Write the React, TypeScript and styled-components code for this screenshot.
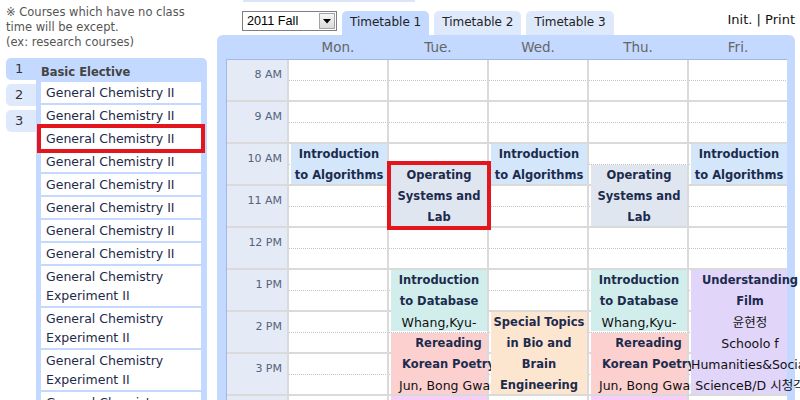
import React from "react";
import styled, { createGlobalStyle } from "styled-components";

const GlobalStyle = createGlobalStyle`
  html, body { margin: 0; padding: 0; overflow: hidden; background: #fff; }
  body { font-family: "DejaVu Sans", "Noto Sans CJK KR", sans-serif; }
`;

const BLUE = "#c3d9ff";
const LIGHT = "#dfe9fc";
const LINE = "#dadada";

const Page = styled.div`
  display: flex;
  gap: 10px;
  width: 800px;
  height: 400px;
  overflow: hidden;
`;

const LeftColumn = styled.div`
  width: 201px;
  padding-left: 6px;
  flex: none;
`;

const Notes = styled.div`
  padding-top: 5px;
  margin-bottom: 8px;
  font-size: 11.5px;
  line-height: 15px;
  color: #555;
  white-space: nowrap;
`;

const SideBox = styled.div`
  display: flex;
`;

const SideTabs = styled.div`
  width: 30px;
  flex: none;
`;

const SideTab = styled.div<{ $active?: boolean }>`
  height: 22px;
  line-height: 22px;
  padding-left: 9px;
  margin-bottom: 4px;
  font-size: 13px;
  color: #333;
  background: ${(p) => (p.$active ? BLUE : LIGHT)};
  border-radius: 5px 0 0 5px;
`;

const ListPanel = styled.div`
  flex: 1;
  min-height: 400px;
  background: ${BLUE};
  border-radius: 0 5px 0 0;
  padding: 0 6px 0 5px;
`;

const ListHeader = styled.div`
  padding: 5px 0 1px;
  line-height: 18px;
  font-size: 11.5px;
  font-weight: bold;
  color: #444;
`;

const ListItem = styled.div<{ $selected?: boolean }>`
  background: #fff;
  margin-bottom: 2px;
  padding: 1px 5px;
  line-height: 19px;
  font-size: 12.5px;
  color: #1e2a4a;
  outline: ${(p) => (p.$selected ? "4px solid #e3161e" : "none")};
`;

const RightColumn = styled.div`
  width: 578px;
  flex: none;
  display: flex;
  flex-direction: column;
`;

const TopStrip = styled.div`
  flex: none;
  margin-left: 26px;
  width: 172px;
  height: 2px;
  background: #dae5fa;
`;

const Toolbar = styled.div`
  flex: none;
  display: flex;
  align-items: flex-end;
  padding-left: 25px;
  margin-top: 9px;
  height: 24px;
`;

const SelectBox = styled.div`
  box-sizing: border-box;
  width: 95px;
  height: 20px;
  margin-bottom: 4px;
  border: 1px solid #7f7f7f;
  background: #fff;
  display: flex;
  align-items: center;
  justify-content: space-between;
  padding: 0 1px 0 4px;
  font-family: "Liberation Sans", Arial, sans-serif;
  font-size: 12.7px;
  color: #000;
`;

const SelectButton = styled.div`
  box-sizing: border-box;
  width: 16px;
  height: 16px;
  border: 1px solid #a3a3a3;
  background: linear-gradient(#f6f6f6, #dadada);
  display: flex;
  align-items: center;
  justify-content: center;
`;

const TabButton = styled.div<{ $active?: boolean }>`
  margin-left: 5px;
  height: 24px;
  line-height: 22px;
  padding: 0 8px;
  font-size: 12px;
  color: #222;
  background: ${(p) => (p.$active ? BLUE : LIGHT)};
  border-radius: 5px 5px 0 0;
`;

const Links = styled.div`
  margin-left: auto;
  align-self: flex-start;
  margin-top: 1px;
  line-height: 16px;
  font-size: 13px;
  color: #111;
`;

const Panel = styled.div`
  flex: none;
  background: ${BLUE};
  border-radius: 6px 6px 0 0;
  padding: 0 8px 0 9px;
`;

const DayHeader = styled.div`
  display: grid;
  grid-template-columns: 60px repeat(5, 98px);
  column-gap: 2px;
  margin-left: 1px;
  height: 24px;
  align-items: center;
  font-size: 13.5px;
  color: #666;
  text-align: center;
`;

const Grid = styled.div`
  display: grid;
  grid-template-columns: 60px repeat(5, 98px);
  grid-template-rows: repeat(20, 21px);
  column-gap: 2px;
  width: 560px;
  background: ${LINE};
  border-top: 1px solid #a3b9df;
  border-left: 1px solid #a3b9df;
`;

const TimeCell = styled.div<{ $row: number }>`
  grid-column: 1;
  grid-row: ${(p) => p.$row} / span 2;
  background: #e4ebf6;
  border-bottom: 2px solid ${LINE};
  text-align: right;
  padding: 8px 5px 0 0;
  font-size: 11px;
  line-height: 14px;
  color: #56627a;
`;

const DayCell = styled.div<{ $row: number; $col: number }>`
  grid-column: ${(p) => p.$col};
  grid-row: ${(p) => p.$row} / span 2;
  background: linear-gradient(to right, #c4c4c4 50%, transparent 0) 0 20px / 2px 1px repeat-x, #fff;
  border-bottom: 2px solid ${LINE};
`;

const Event = styled.div<{ $col: number; $start: number; $end: number; $bg: string; $hl?: boolean }>`
  grid-column: ${(p) => p.$col};
  grid-row: ${(p) => p.$start} / ${(p) => p.$end};
  margin: 0 0 2px 2px;
  min-width: 0;
  position: relative;
  z-index: ${(p) => (p.$hl ? 2 : "auto")};
  background: ${(p) => p.$bg};
  outline: ${(p) => (p.$hl ? "4px solid #e3161e" : "none")};
  text-align: center;
  line-height: 21px;
`;

const EventInner = styled.div<{ $w?: number }>`
  width: ${(p) => (p.$w ? `${p.$w}px` : "auto")};
`;

const EventTitle = styled.div`
  font-size: 11.5px;
  font-weight: bold;
  color: #1c2b4d;
`;

const EventInfo = styled.div`
  font-size: 12.5px;
  color: #111;
`;

type Ev = {
  day: number;
  from: number;
  to: number;
  title?: string;
  info?: string[];
  bg: string;
  hl?: boolean;
  w?: number;
};

const C = {
  algo: "#d3e6fa",
  os: "#dfe6f0",
  db: "#d1eeec",
  poetry: "#fdd0d0",
  bio: "#fde6d0",
  film: "#e2d5fa",
  mag: "#f8cdf7",
};

const events: Ev[] = [
  { day: 0, from: 10, to: 11, title: "Introduction to Algorithms", bg: C.algo },
  { day: 1, from: 10.5, to: 12, title: "Operating Systems and Lab", bg: C.os, hl: true },
  { day: 1, from: 13, to: 14.5, title: "Introduction to Database", info: ["Whang,Kyu-Young"], bg: C.db },
  { day: 1, from: 14.5, to: 16, title: "Rereading Korean Poetry", info: ["Jun, Bong Gwan"], bg: C.poetry, w: 115 },
  { day: 1, from: 16, to: 17, bg: C.mag },
  { day: 2, from: 10, to: 11, title: "Introduction to Algorithms", bg: C.algo },
  { day: 2, from: 14, to: 16, title: "Special Topics in Bio and Brain Engineering", bg: C.bio },
  { day: 3, from: 10.5, to: 12, title: "Operating Systems and Lab", bg: C.os },
  { day: 3, from: 13, to: 14.5, title: "Introduction to Database", info: ["Whang,Kyu-Young"], bg: C.db },
  { day: 3, from: 14.5, to: 16, title: "Rereading Korean Poetry", info: ["Jun, Bong Gwan"], bg: C.poetry, w: 115 },
  { day: 3, from: 16, to: 17, bg: C.mag },
  { day: 4, from: 10, to: 11, title: "Introduction to Algorithms", bg: C.algo },
  {
    day: 4,
    from: 13,
    to: 16,
    title: "Understanding Film",
    info: ["윤현정", "Schoolo f Humanities&Social ScienceB/D 시청각실"],
    bg: C.film,
    w: 118,
  },
];

const hours = [8, 9, 10, 11, 12, 13, 14, 15, 16, 17];
const hourLabel = (h: number) => (h < 12 ? `${h} AM` : h === 12 ? "12 PM" : `${h - 12} PM`);
const rowOf = (t: number) => (t - 8) * 2 + 1;

const days = ["Mon.", "Tue.", "Wed.", "Thu.", "Fri."];

const courses: string[] = [
  ...Array(8).fill("General Chemistry II"),
  ...Array(4).fill("General Chemistry Experiment II"),
];

export default function App() {
  return (
    <>
      <GlobalStyle />
      <Page>
        <LeftColumn>
          <Notes>
            ※ Courses which have no class
            <br />
            time will be except.
            <br />
            (ex: research courses)
          </Notes>
          <SideBox>
            <SideTabs>
              <SideTab $active>1</SideTab>
              <SideTab>2</SideTab>
              <SideTab>3</SideTab>
            </SideTabs>
            <ListPanel>
              <ListHeader>Basic Elective</ListHeader>
              {courses.map((c, i) => (
                <ListItem key={i} $selected={i === 2}>
                  {c}
                </ListItem>
              ))}
            </ListPanel>
          </SideBox>
        </LeftColumn>
        <RightColumn>
          <TopStrip />
          <Toolbar>
            <SelectBox>
              <span>2011 Fall</span>
              <SelectButton>
                <svg width="8" height="5" viewBox="0 0 8 5">
                  <path d="M0 0 H8 L4 4.5 Z" fill="#000" />
                </svg>
              </SelectButton>
            </SelectBox>
            <TabButton $active>Timetable 1</TabButton>
            <TabButton>Timetable 2</TabButton>
            <TabButton>Timetable 3</TabButton>
            <Links>Init. | Print</Links>
          </Toolbar>
          <Panel>
            <DayHeader>
              <div />
              {days.map((d) => (
                <div key={d}>{d}</div>
              ))}
            </DayHeader>
            <Grid>
              {hours.map((h) => (
                <React.Fragment key={h}>
                  <TimeCell $row={rowOf(h)}>{hourLabel(h)}</TimeCell>
                  {days.map((d, di) => (
                    <DayCell key={d} $row={rowOf(h)} $col={di + 2} />
                  ))}
                </React.Fragment>
              ))}
              {events.map((e, i) => (
                <Event
                  key={i}
                  $col={e.day + 2}
                  $start={rowOf(e.from)}
                  $end={rowOf(e.to)}
                  $bg={e.bg}
                  $hl={e.hl}
                >
                  <EventInner $w={e.w}>
                    {e.title && <EventTitle>{e.title}</EventTitle>}
                    {e.info?.map((t, j) => (
                      <EventInfo key={j}>{t}</EventInfo>
                    ))}
                  </EventInner>
                </Event>
              ))}
            </Grid>
          </Panel>
        </RightColumn>
      </Page>
    </>
  );
}
